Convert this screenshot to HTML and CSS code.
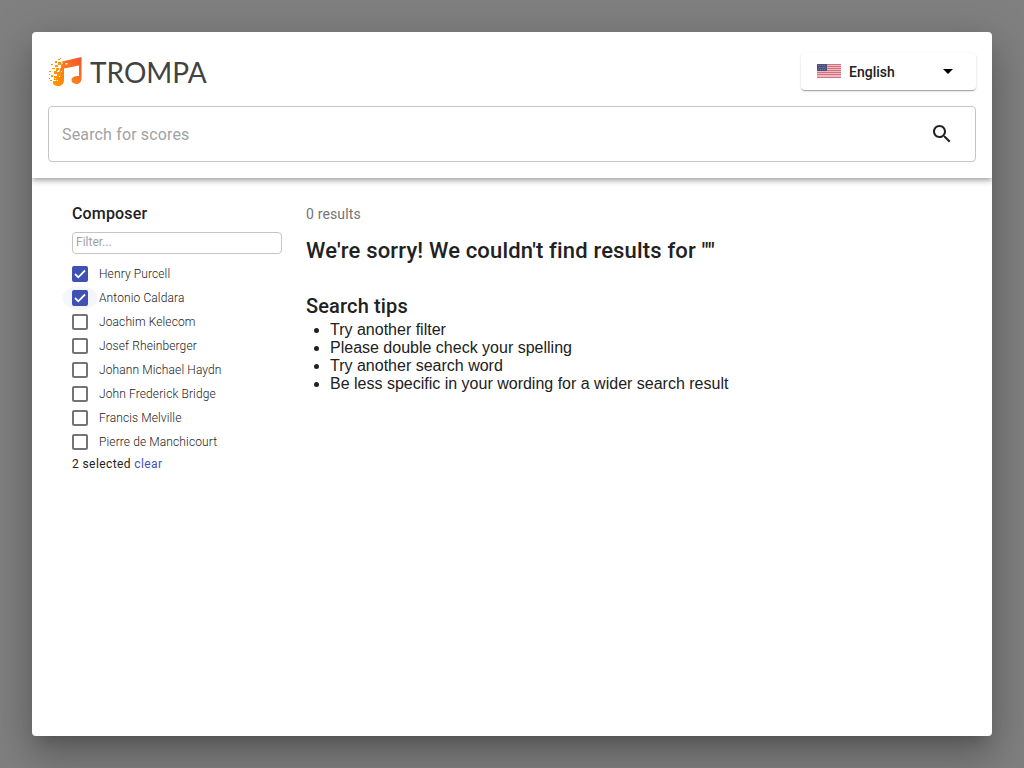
FILE: index.html
```html
<!DOCTYPE html>
<html lang="en">
<head>
<meta charset="utf-8">
<meta name="viewport" content="width=device-width, initial-scale=1">
<title>Trompa – Search for scores</title>
<link rel="stylesheet" href="styles.css">
</head>
<body>
<main class="dialog">
  <header class="header">
    <div class="topbar">
      <a class="logo" href="#" aria-label="Trompa">
        <svg class="logo-mark" viewBox="0 0 36 32" aria-hidden="true">
          <defs>
            <linearGradient id="note" x1="0" y1="1" x2="1" y2="0">
              <stop offset="0" stop-color="#ff9800"/>
              <stop offset=".5" stop-color="#fb7b1c"/>
              <stop offset="1" stop-color="#f4512c"/>
            </linearGradient>
          </defs>
          <path fill="url(#note)" d="M14 5.500 33.500 1v21.500c0 3.500-2.200 5.500-5.200 5.500-3 0-4.800-1.700-4.800-3.900 0-2.600 2.600-4.100 7.500-4.100V9.500L16 12.500V24c0 4-2.500 6-6 6-3 0-5.200-1.500-5.200-3.300L9 24l1-4 1.500-5 1.500-5z"/>
          <path fill="#ff9408" d="M7 5h2v2H7zM10 3h2v1h-2zM10 6h3v3h-3zM7 9h3v2H7zM3 8h2v1H3zM8 12h3v3H8zM4 12h3v1H4zM1 15h2v1H1zM6 15h3v3H6zM3 19h2v2H3zM1 18h1v1H1zM6 20h4v4H6zM2 24h2v1H2zM5 25h3v2H5zM12 2h1v1h-1zM1 22h1v1H1zM9 16h4v5H9z"/>
          <path fill="#fff" d="M17.500 7h2v1.500h-2zM14 6.500h1v1h-1zM12 11h1v1h-1zM10 14h1v1h-1zM8 18h1v1H8zM11 20h1v1h-1zM7 22h1v1H7zM9 24h1v1H9zM13 15h1v1h-1z"/>
        </svg>
        <span class="logo-text">TROMPA</span>
      </a>
      <div class="language">
        <svg class="flag" viewBox="0 0 24 14" aria-hidden="true">
          <path fill="#e9bcc1" d="M0 0h24v14H0z"/>
          <path stroke="#d4717c" d="M0 .5h24M0 2.500h24M0 4.500h24M0 6.500h24M0 8.500h24M0 10.500h24M0 13.500h24"/>
          <path fill="#50517f" d="M0 0h10v7H0z"/>
          <path stroke="#72739c" stroke-dasharray="1 1" d="M1 1.500h8M2 3.500h8M1 5.500h8"/>
        </svg>
        <select class="language-select" aria-label="Language"><option>English</option></select>
        <svg class="caret" viewBox="0 0 24 24" aria-hidden="true"><path d="m7 10 5 5 5-5z"/></svg>
      </div>
    </div>
    <form class="search" role="search">
      <input class="search-input" type="text" placeholder="Search for scores" aria-label="Search for scores">
      <button class="search-button" type="button" aria-label="Search">
        <svg class="search-icon" viewBox="0 0 24 24" aria-hidden="true"><path d="M15.500 14h-.79l-.28-.27C15.410 12.590 16 11.110 16 9.500 16 5.910 13.090 3 9.500 3S3 5.910 3 9.500 5.910 16 9.500 16c1.610 0 3.090-.59 4.230-1.570l.27.28v.79l5 4.990L20.490 19l-4.990-5zm-6 0C7.010 14 5 11.990 5 9.500S7.010 5 9.500 5 14 7.010 14 9.500 11.990 14 9.500 14z"/></svg>
      </button>
    </form>
  </header>
  <div class="content">
    <aside class="filters">
      <h2 class="filter-title">Composer</h2>
      <input class="filter-input" type="text" placeholder="Filter..." aria-label="Filter composers">
      <div class="options">
        <label class="option"><input class="check" type="checkbox" checked>Henry Purcell</label>
        <label class="option active"><input class="check" type="checkbox" checked>Antonio Caldara</label>
        <label class="option"><input class="check" type="checkbox">Joachim Kelecom</label>
        <label class="option"><input class="check" type="checkbox">Josef Rheinberger</label>
        <label class="option"><input class="check" type="checkbox">Johann Michael Haydn</label>
        <label class="option"><input class="check" type="checkbox">John Frederick Bridge</label>
        <label class="option"><input class="check" type="checkbox">Francis Melville</label>
        <label class="option"><input class="check" type="checkbox">Pierre de Manchicourt</label>
      </div>
      <p class="selected">2 selected <a class="clear" href="#">clear</a></p>
    </aside>
    <section class="results">
      <p class="count">0 results</p>
      <h1 class="message">We're sorry! We couldn't find results for ""</h1>
      <h2 class="tips-title">Search tips</h2>
      <ul class="tips">
        <li>Try another filter</li>
        <li>Please double check your spelling</li>
        <li>Try another search word</li>
        <li>Be less specific in your wording for a wider search result</li>
      </ul>
    </section>
  </div>
</main>
</body>
</html>
```
FILE: styles.css
```css
* { box-sizing: border-box; }

body {
  margin: 0;
  padding: 32px;
  min-height: 100vh;
  display: flex;
  background: #808080;
  color: #212121;
  font-family: Roboto, "Liberation Sans", sans-serif;
}

h1, h2, p, ul { margin: 0; }

.dialog {
  flex: 1;
  min-width: 0;
  background: #fff;
  border-radius: 4px;
  box-shadow: 0 11px 15px -7px rgba(0,0,0,.2), 0 24px 38px 3px rgba(0,0,0,.14), 0 9px 46px 8px rgba(0,0,0,.12);
}

.header {
  padding: 21px 16px 16px;
  border-radius: 4px 4px 0 0;
  box-shadow: 0 2px 4px -1px rgba(0,0,0,.2), 0 4px 5px 0 rgba(0,0,0,.14), 0 1px 10px 0 rgba(0,0,0,.12);
  clip-path: inset(0 0 -16px 0);
}

.topbar {
  display: flex;
  align-items: center;
  justify-content: space-between;
  margin-bottom: 16px;
}

.logo {
  display: flex;
  align-items: center;
  gap: 6px;
  color: #424242;
  text-decoration: none;
}
.logo-mark { width: 36px; height: 32px; }
.logo-text { font: 400 28px/32px Lato, sans-serif; }

.language {
  position: relative;
  width: 175px;
  height: 37px;
  border-radius: 4px;
  box-shadow: 0 2px 1px -1px rgba(0,0,0,.2), 0 1px 1px 0 rgba(0,0,0,.14), 0 1px 3px 0 rgba(0,0,0,.12);
}
.flag { position: absolute; left: 16px; top: 11px; width: 24px; height: 14px; }
.caret { position: absolute; right: 16px; top: 6px; width: 24px; height: 24px; pointer-events: none; }
.language-select {
  appearance: none;
  width: 100%;
  height: 100%;
  padding: 0 40px 0 48px;
  border: 0;
  border-radius: 4px;
  background: transparent;
  color: #212121;
  font: 500 14px Roboto, sans-serif;
}

.search {
  display: flex;
  align-items: center;
  height: 56px;
  padding: 0 21px 0 13px;
  border: 1px solid #c4c4c4;
  border-radius: 4px;
}
.search-input {
  flex: 1;
  min-width: 0;
  padding: 2px 0 0;
  border: 0;
  outline: 0;
  background: transparent;
  color: #212121;
  font: 400 16px/24px Roboto, sans-serif;
  letter-spacing: .00938em;
}
.search-input::placeholder, .filter-input::placeholder { color: #a2a2a2; opacity: 1; }
.search-button { display: flex; padding: 0; border: 0; background: none; color: #212121; }
.search-icon { width: 24px; height: 24px; fill: currentColor; }

.content {
  display: grid;
  grid-template-columns: 210px minmax(0, 1fr);
  gap: 24px;
  padding: 24px 40px;
}

.filter-title { font-size: 16px; line-height: 24px; font-weight: 500; letter-spacing: .00938em; }
.filter-input {
  display: block;
  width: 100%;
  height: 22px;
  margin: 6px 0 8px;
  padding: 0 3px 2px;
  border: 1px solid #c4c4c4;
  border-radius: 4px;
  background: #fff;
  font: 400 12px Roboto, sans-serif;
}
.option {
  display: flex;
  align-items: center;
  gap: 11px;
  height: 24px;
  font-size: 12px;
  font-weight: 300;
  letter-spacing: .00938em;
}
.check {
  appearance: none;
  width: 16px;
  height: 16px;
  margin: 0;
  border: 2px solid #757575;
  border-radius: 2px;
  background: #fff;
}
.check:checked {
  border-color: #3f51b5;
  background: #3f51b5 url("data:image/svg+xml,%3Csvg xmlns='http://www.w3.org/2000/svg' viewBox='0 0 12 12'%3E%3Cpath d='M1 6l3.300 3.300L11 2.500' fill='none' stroke='white' stroke-width='1.800'/%3E%3C/svg%3E") center / 12px no-repeat;
}
.active {
  margin-left: -11px;
  padding-left: 11px;
  background: radial-gradient(ellipse 18px 12px at 19px 12px, #f5f6fb 96%, transparent);
}
.selected { font-size: 12px; line-height: 20px; letter-spacing: .03333em; }
.clear { color: #3f51b5; text-decoration: none; }

.count { color: #757575; font-size: 14px; line-height: 24px; letter-spacing: .01071em; }
.message { margin-top: 8px; font-size: 22px; line-height: 34px; font-weight: 500; letter-spacing: .0075em; }
.tips-title { margin-top: 23px; font-size: 20px; line-height: 30px; font-weight: 500; letter-spacing: .0075em; }
.tips { padding-left: 24px; font: 16px/18px "Liberation Sans", sans-serif; }
```
